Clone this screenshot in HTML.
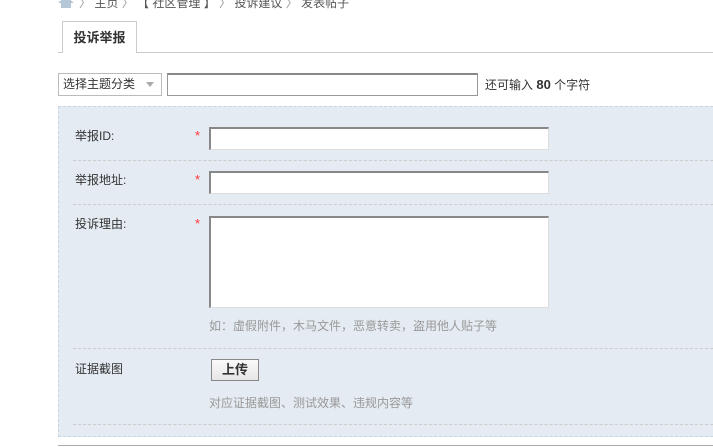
<!DOCTYPE html>
<html><head><meta charset="utf-8"><style>
*{margin:0;padding:0;box-sizing:border-box}
body{width:713px;height:448px;overflow:hidden;background:#fff;font-family:"Liberation Sans","Noto Sans CJK SC",sans-serif;font-size:12px;color:#333;position:relative}
.a{position:absolute}
.inp{position:absolute;background:#fff;border:1px solid #ddd;border-top:2px solid #888;border-left:2px solid #888}
.sep{position:absolute;left:73px;right:0;border-top:1px dashed #ccc}
.gray{color:#999}
</style></head><body>
<div class="a" style="left:58px;top:-3px;width:16px;height:10px;">
<svg width="16" height="10"><path d="M0 5 L8 -2 L16 5 L13 5 L13 10 L3 10 L3 5Z" fill="#b6c8d8"/></svg></div>
<div class="a" style="left:79px;top:-6px;color:#555;white-space:nowrap"><span class="gray">〉</span> 主页 <span class="gray">〉</span> 【 社区管理 】 <span class="gray">〉</span> 投诉建议 <span class="gray">〉</span> 发表帖子</div>
<div class="a" style="left:58px;top:52px;width:655px;border-top:1px solid #ccc"></div>
<div class="a" style="left:62px;top:21px;width:75px;height:32px;border:1px solid #ccc;border-bottom:none;background:#fff;font-weight:bold;text-align:center;line-height:32px;font-size:13px">投诉举报</div>
<div class="a" style="left:58px;top:73px;width:104px;height:23px;border:1px solid #bbb;line-height:21px;padding-left:4px;font-size:12px">选择主题分类<span class="a" style="left:87px;top:8px;border:4px solid transparent;border-top:5px solid #aaa"></span></div>
<div class="a" style="left:167px;top:73px;width:311px;height:23px;border:1px solid #999;border-top:2px solid #888"></div>
<div class="a" style="left:485px;top:76px">还可输入 <b style="font-size:13px">80</b> 个字符</div>
<div class="a" style="left:58px;top:106px;width:660px;height:331px;background:#e4ebf2;border:1px dashed #c5d5e3"></div>
<div class="a" style="left:75px;top:127px">举报ID:</div>
<div class="a" style="left:195px;top:128px;color:#f33;font-size:13px">*</div>
<div class="inp" style="left:209px;top:127px;width:340px;height:23px"></div>
<div class="sep" style="top:160px"></div>
<div class="a" style="left:75px;top:171px">举报地址:</div>
<div class="a" style="left:195px;top:172px;color:#f33;font-size:13px">*</div>
<div class="inp" style="left:209px;top:171px;width:340px;height:23px"></div>
<div class="sep" style="top:204px"></div>
<div class="a" style="left:75px;top:215px">投诉理由:</div>
<div class="a" style="left:195px;top:216px;color:#f33;font-size:13px">*</div>
<div class="inp" style="left:209px;top:216px;width:340px;height:92px"></div>
<div class="a gray" style="left:209px;top:317px">如：虚假附件，木马文件，恶意转卖，盗用他人贴子等</div>
<div class="sep" style="top:348px"></div>
<div class="a" style="left:75px;top:360px">证据截图</div>
<div class="a" style="left:211px;top:359px;width:48px;height:22px;border:1px solid #888;background:linear-gradient(#fafafa,#e6e6e6);font-weight:bold;font-size:13px;text-align:center;line-height:20px">上传</div>
<div class="a gray" style="left:209px;top:394px">对应证据截图、测试效果、违规内容等</div>
<div class="sep" style="top:424px"></div>
<div class="a" style="left:58px;top:445px;width:660px;border-top:1px solid #aaa"></div>
</body></html>
